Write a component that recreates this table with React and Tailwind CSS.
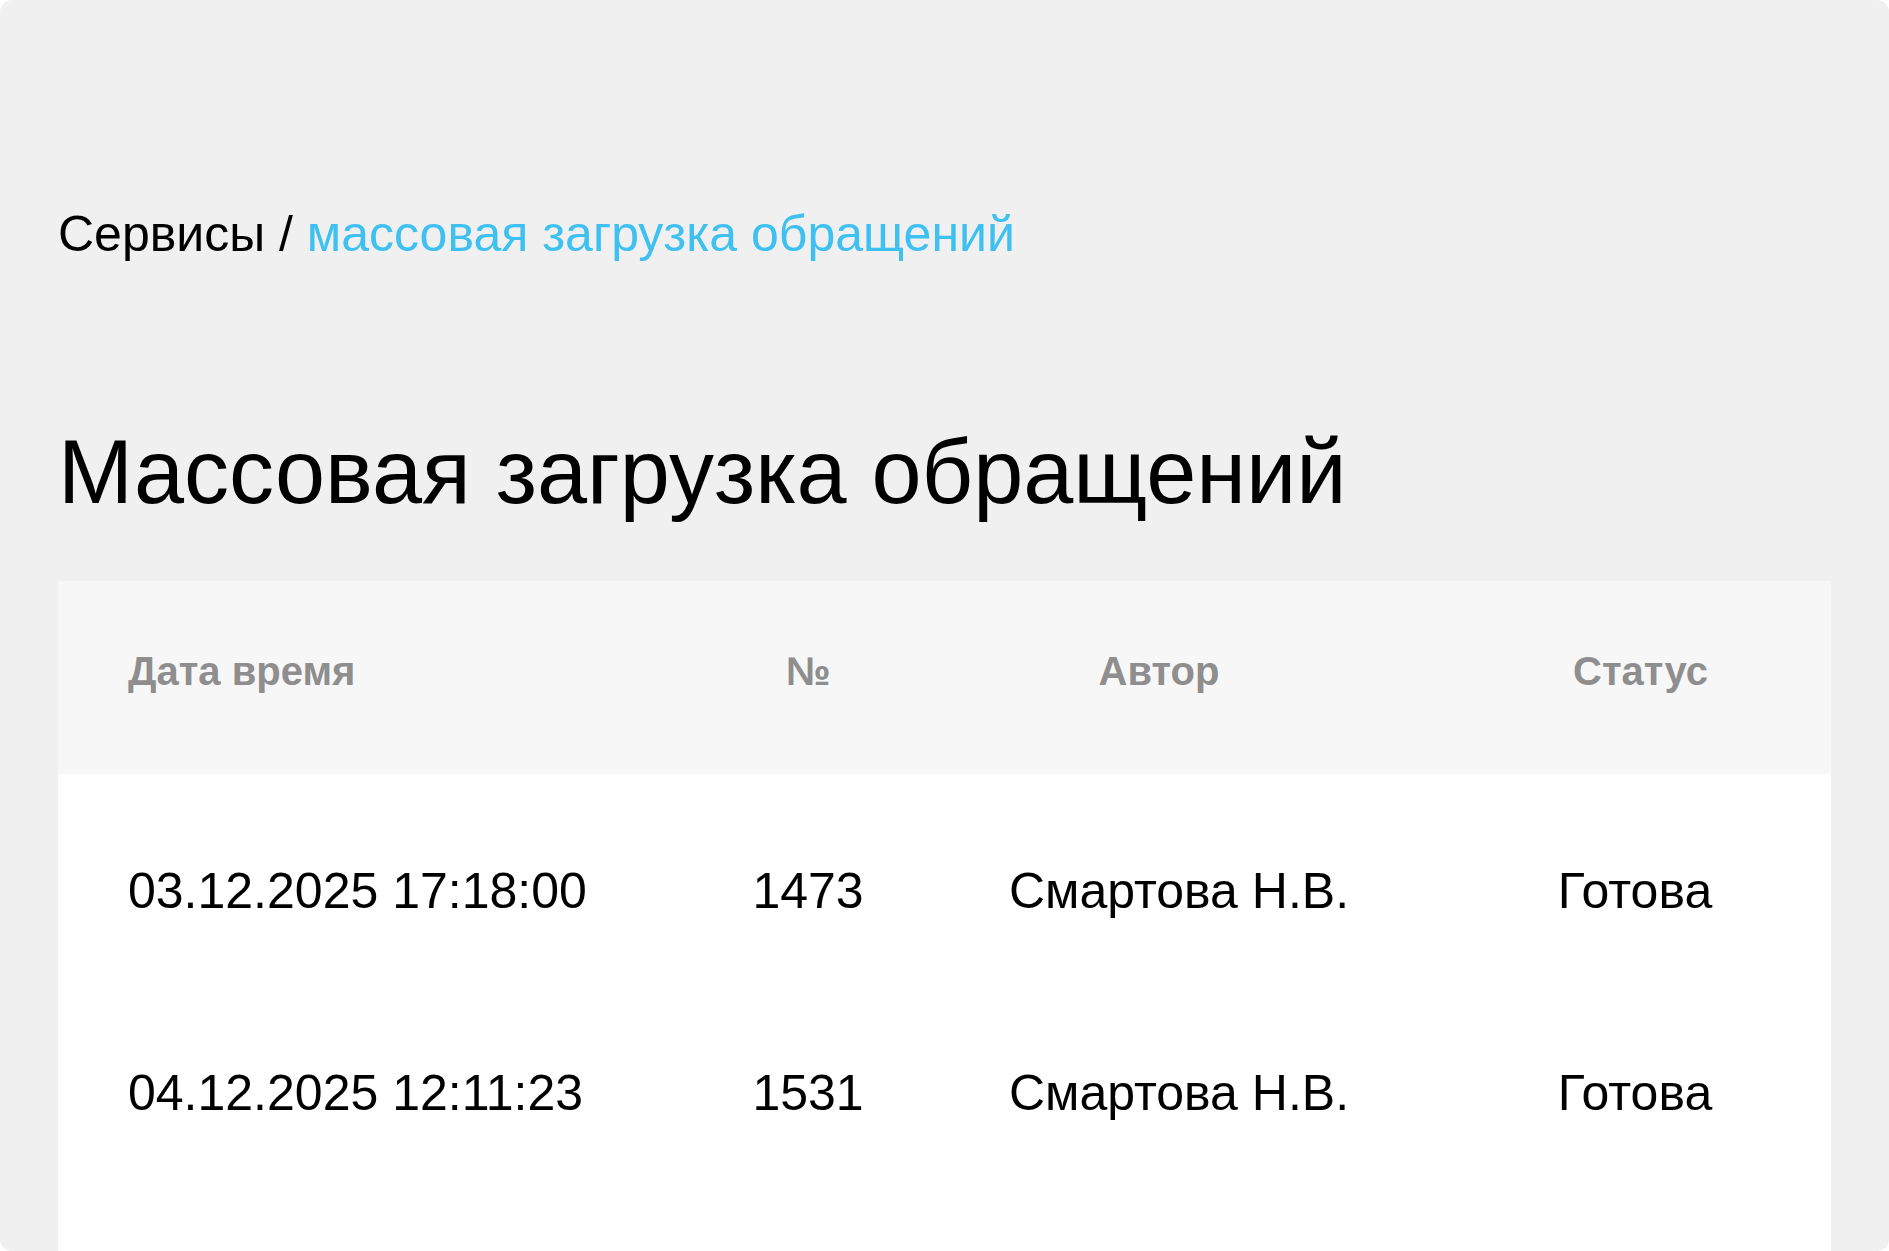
import React from "react";

const rows = [
  { date: "03.12.2025 17:18:00", num: "1473", author: "Смартова Н.В.", status: "Готова" },
  { date: "04.12.2025 12:11:23", num: "1531", author: "Смартова Н.В.", status: "Готова" },
];

export default function App() {
  return (
    <div className="w-full h-[1251px] bg-white" style={{ fontFamily: '"Liberation Sans", Arial, sans-serif' }}>
      <div className="h-[1251px] bg-[#f0f0f0] rounded-[12px] overflow-hidden px-[58px] pt-[206px]">
        <div className="text-[50px] leading-[56px] text-black whitespace-nowrap">
          Сервисы / <span className="text-[#3ec0f0]">массовая загрузка обращений</span>
        </div>
        <h1 className="mt-[160px] text-[90px] leading-[100px] text-black font-normal whitespace-nowrap">
          Массовая загрузка обращений
        </h1>
        <div className="mt-[59px] bg-white h-[800px]">
          <div className="grid grid-cols-[672px_156px_558px_388px] bg-[#f7f7f7] h-[193px] pt-[70px] text-[40px] leading-[40px] font-bold text-[#8e8e8e]">
            <div className="pl-[70px]">Дата время</div>
            <div className="text-center">№</div>
            <div className="text-center pr-[12px]">Автор</div>
            <div className="text-center pl-[5px]">Статус</div>
          </div>
          <div className="pt-[16px]">
            {rows.map((r, i) => (
              <div
                key={i}
                className="grid grid-cols-[672px_156px_558px_388px] py-[76px] text-[50px] leading-[50px] text-black whitespace-nowrap"
              >
                <div className="pl-[70px]">{r.date}</div>
                <div className="text-center">{r.num}</div>
                <div className="text-center pl-[28px]">{r.author}</div>
                <div className="text-center pr-[6px]">{r.status}</div>
              </div>
            ))}
          </div>
        </div>
      </div>
    </div>
  );
}
